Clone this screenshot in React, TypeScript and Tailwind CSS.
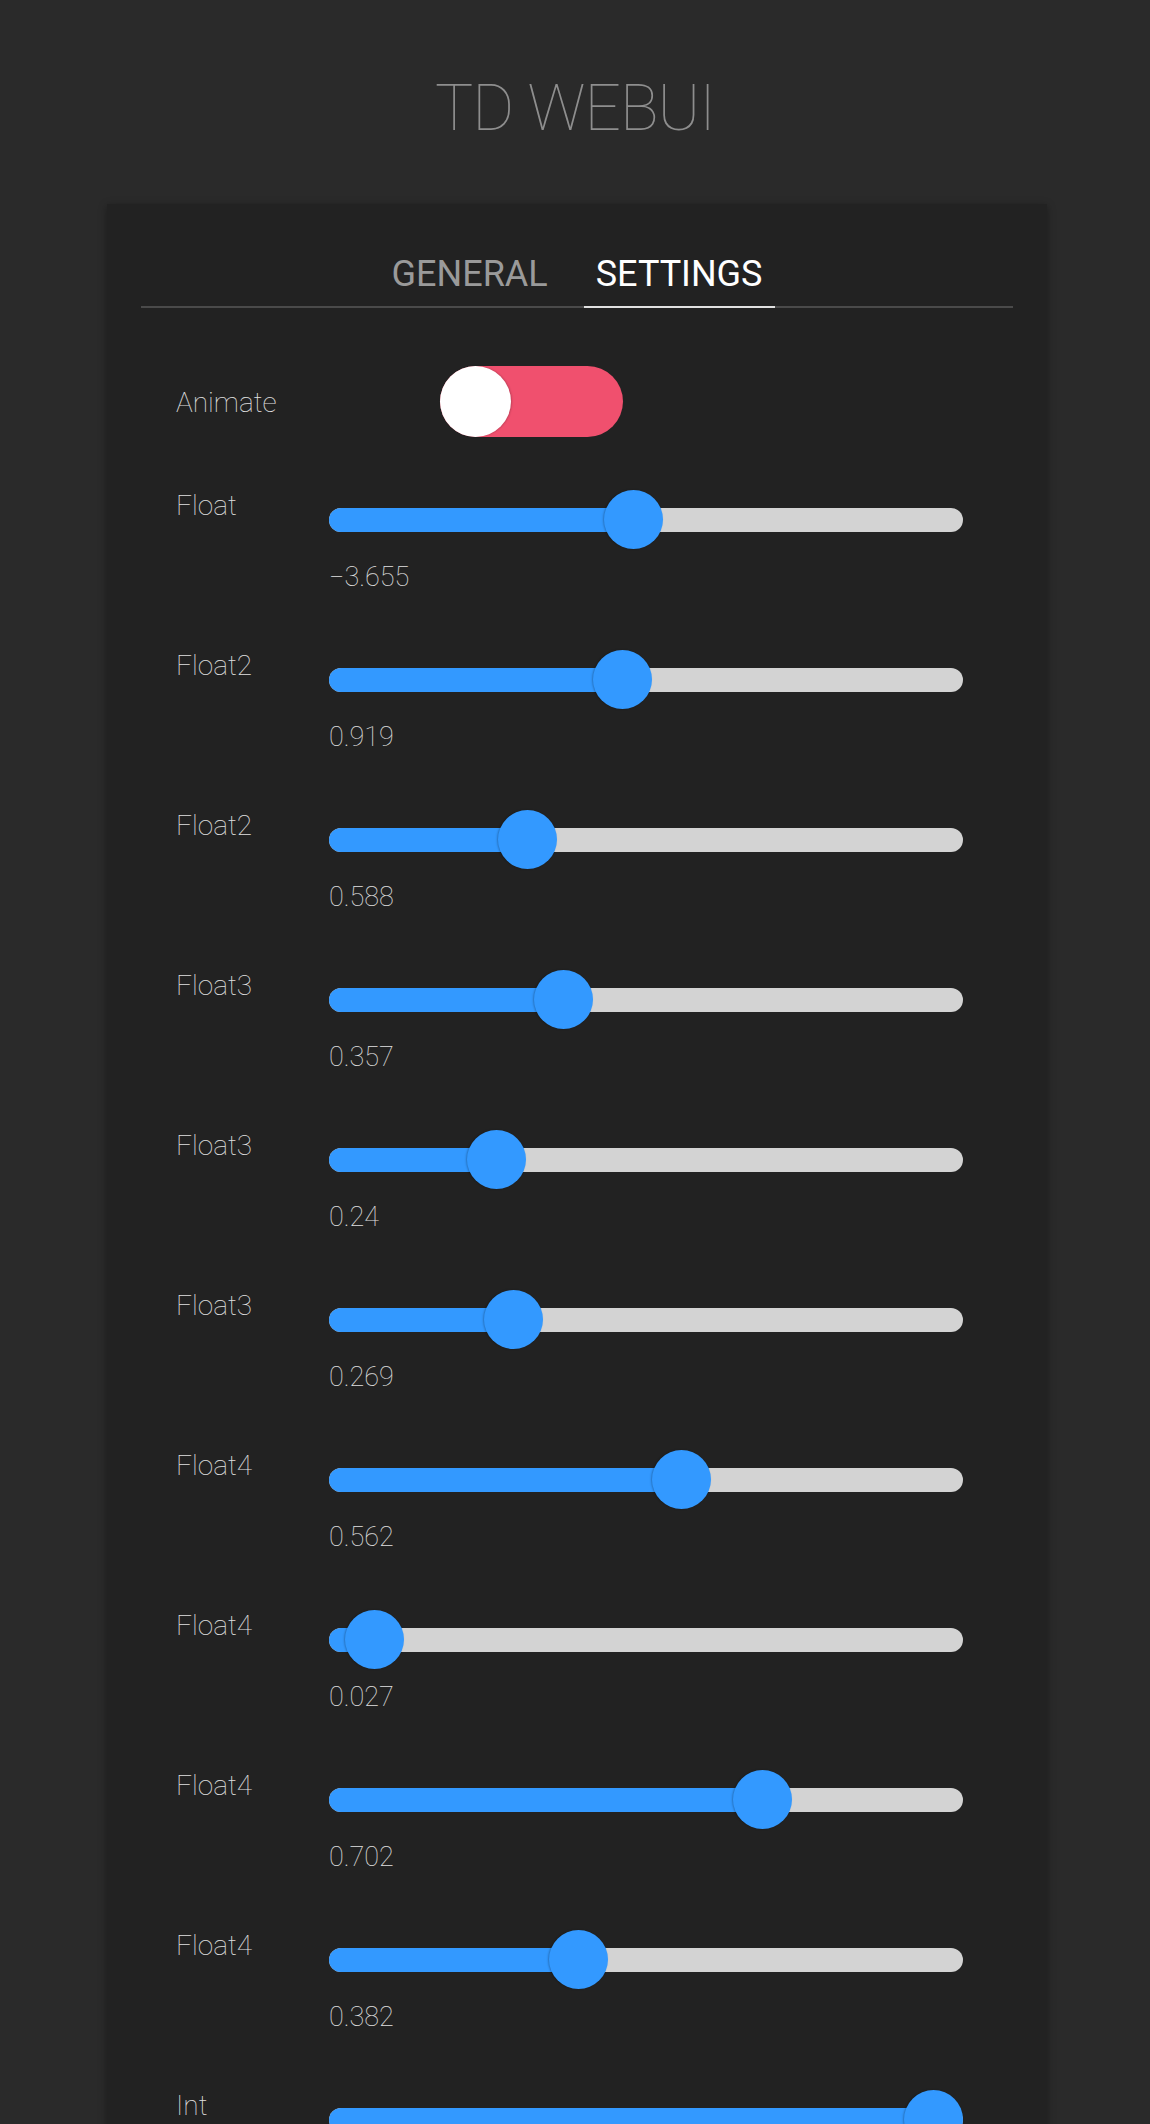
import React from "react";

type Row = { label: string; value: string; frac: number };

const rows: Row[] = [
  { label: "Float", value: "−3.655", frac: 0.479 },
  { label: "Float2", value: "0.919", frac: 0.459 },
  { label: "Float2", value: "0.588", frac: 0.294 },
  { label: "Float3", value: "0.357", frac: 0.357 },
  { label: "Float3", value: "0.24", frac: 0.24 },
  { label: "Float3", value: "0.269", frac: 0.269 },
  { label: "Float4", value: "0.562", frac: 0.562 },
  { label: "Float4", value: "0.027", frac: 0.027 },
  { label: "Float4", value: "0.702", frac: 0.702 },
  { label: "Float4", value: "0.382", frac: 0.382 },
  { label: "Int", value: "10", frac: 1 },
];

function Slider({ frac }: { frac: number }) {
  const center = 29.5 + frac * 575;
  return (
    <div className="relative h-[59px] w-[634px]">
      <div className="absolute left-0 right-0 top-[17.5px] h-[24px] rounded-full bg-[#d3d3d3]" />
      <div
        className="absolute left-0 top-[17.5px] h-[24px] rounded-l-full bg-[#3399ff]"
        style={{ width: center }}
      />
      <div
        className="absolute top-0 h-[59px] w-[59px] rounded-full bg-[#3399ff] shadow-[-1px_0_2px_rgba(0,0,0,0.25)]"
        style={{ left: center - 29.5 }}
      />
    </div>
  );
}

export default function App() {
  return (
    <div
      className="min-h-screen bg-[#2a2a2a] pb-20"
      style={{ fontFamily: "Roboto, 'Noto Sans', sans-serif" }}
    >
      <div className="pt-[77px] text-center">
        <h1 className="text-[64px] font-thin leading-none tracking-[-1px] text-[#8e8e8e]">
          TD WEBUI
        </h1>
      </div>
      <div className="ml-[107px] mt-[63px] w-[940px] bg-[#222222] px-[34px] pt-[52px] shadow-[0_2px_8px_rgba(0,0,0,0.35)]">
        <div className="flex justify-center gap-[24px] border-b-2 border-[#4a4a4a]">
          <div className="-mb-[2px] border-b-2 border-transparent px-[12px] pb-[14px] text-[36px] leading-none text-[#9a9a9a]">
            GENERAL
          </div>
          <div className="-mb-[2px] border-b-2 border-[#e0e0e0] px-[12px] pb-[14px] text-[36px] leading-none text-white">
            SETTINGS
          </div>
        </div>
        <div className="px-[35px] pt-[58px]">
          <div className="flex items-center">
            <div className="w-[264px] pt-[2px] text-[28px] font-thin leading-[36px] text-[#e0e0e0]">
              Animate
            </div>
            <div className="relative h-[71px] w-[183px] rounded-full bg-[#f0506e]">
              <div className="absolute left-0 top-0 h-[71px] w-[71px] rounded-full bg-white shadow-[1px_0_2px_rgba(0,0,0,0.2)]" />
            </div>
          </div>
          <div className="mt-[49px] flex flex-col">
            {rows.map((r, i) => (
              <div key={i} className="flex h-[160px]">
                <div className="w-[153px] pt-[2px] text-[28px] font-thin leading-[36px] text-[#e0e0e0]">
                  {r.label}
                </div>
                <div className="flex flex-col pt-[4px]">
                  <Slider frac={r.frac} />
                  <div className="mt-[12px] text-[27px] font-thin leading-[32px] text-[#e0e0e0]">
                    {r.value}
                  </div>
                </div>
              </div>
            ))}
          </div>
        </div>
      </div>
    </div>
  );
}
